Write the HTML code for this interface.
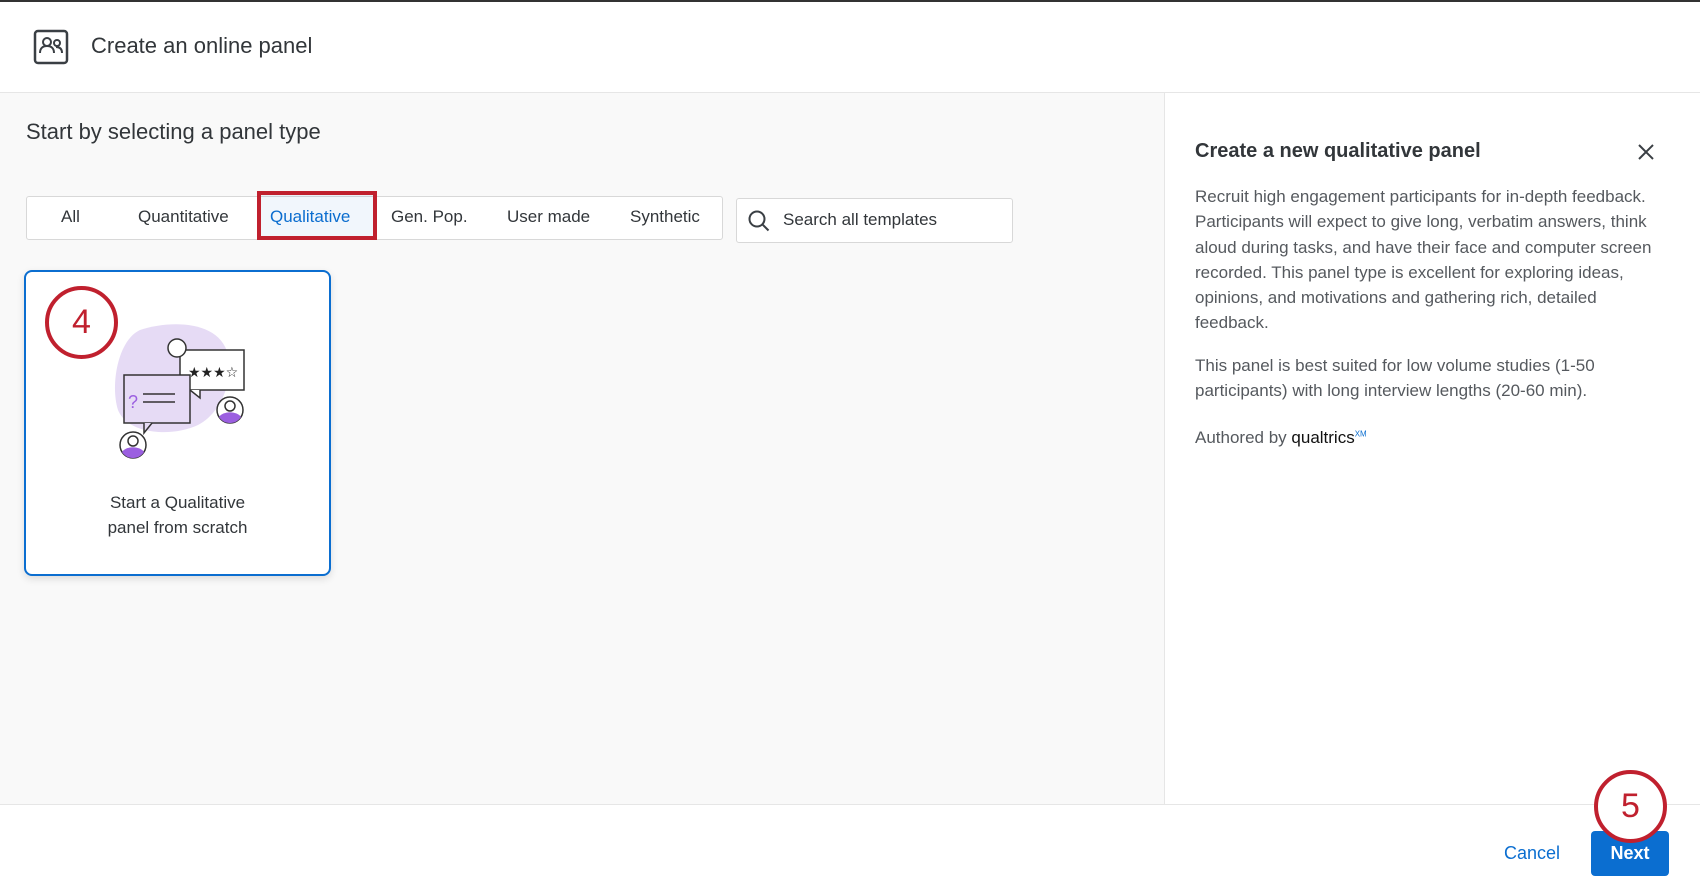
<!DOCTYPE html>
<html><head><style>
*{box-sizing:border-box;margin:0;padding:0}
body{width:1700px;height:886px;overflow:hidden;background:#fff;font-family:"Liberation Sans",sans-serif;color:#32363a;position:relative}
.abs{position:absolute}
</style></head><body>
<div class="abs" style="left:0;top:0;width:1700px;height:2px;background:#333"></div>
<div class="abs" style="left:0;top:92px;width:1164px;height:712px;background:#f9f9f9"></div>
<div class="abs" style="left:0;top:92px;width:1700px;height:1px;background:#e6e6e6"></div>
<div class="abs" style="left:1164px;top:92px;width:1px;height:712px;background:#e6e6e6"></div>
<div class="abs" style="left:0;top:804px;width:1700px;height:1px;background:#e6e6e6"></div>

<svg class="abs" style="left:33px;top:29px" width="36" height="36" viewBox="0 0 36 36"><rect x="2" y="2" width="32" height="32" rx="3" fill="none" stroke="#3a3f44" stroke-width="2.5"/><circle cx="14" cy="13" r="4" fill="none" stroke="#3a3f44" stroke-width="2"/><path d="M7 24c0-5 3-7 7-7s7 2 7 7" fill="none" stroke="#3a3f44" stroke-width="2"/><circle cx="24" cy="14" r="3" fill="none" stroke="#3a3f44" stroke-width="2"/><path d="M23 18c4 0 6 2 6 6" fill="none" stroke="#3a3f44" stroke-width="2"/></svg>
<div class="abs" style="left:91px;top:33px;font-size:22px">Create an online panel</div>
<div class="abs" style="left:26px;top:119px;font-size:22px">Start by selecting a panel type</div>

<div class="abs" style="left:26px;top:196px;width:697px;height:44px;background:#fff;border:1px solid #d8d8d8;border-radius:3px"></div>
<div class="abs" style="left:26px;top:207px;font-size:17px;width:697px;height:22px">
<span class="abs" style="left:35px">All</span>
<span class="abs" style="left:112px">Quantitative</span>
<span class="abs" style="left:244px;color:#0b6ed0">Qualitative</span>
<span class="abs" style="left:365px">Gen. Pop.</span>
<span class="abs" style="left:481px">User made</span>
<span class="abs" style="left:604px">Synthetic</span>
</div>
<div class="abs" style="left:257px;top:191px;width:120px;height:49px;border:4px solid #c0202e;background:rgba(11,110,208,0.06)"></div>
<div class="abs" style="left:736px;top:198px;width:277px;height:45px;background:#fff;border:1px solid #d8d8d8;border-radius:3px"></div>
<svg class="abs" style="left:747px;top:209px" width="24" height="24" viewBox="0 0 24 24"><circle cx="10" cy="10" r="7.5" fill="none" stroke="#3a3f44" stroke-width="2"/><path d="M15.5 15.5l6 6" stroke="#3a3f44" stroke-width="2"/></svg>
<div class="abs" style="left:783px;top:210px;font-size:17px">Search all templates</div>

<div class="abs" style="left:24px;top:270px;width:307px;height:306px;background:#fff;border:2px solid #0b6ed0;border-radius:8px;box-shadow:0 3px 8px rgba(0,0,0,0.12)"></div>
<svg class="abs" style="left:100px;top:310px" width="160" height="160" viewBox="0 0 160 160">
<path d="M40 20c30-10 80-10 88 25 6 30-10 60-30 70-25 12-70 10-80-15-8-25 0-70 22-80z" fill="#e6dbf5"/>
<rect x="80" y="40" width="64" height="40" fill="#fff" stroke="#333" stroke-width="1.5"/>
<text x="88" y="67" font-size="14" fill="#222" font-family="DejaVu Sans">★★★☆</text>
<path d="M90 80l10 8v-8" fill="#fff" stroke="#333" stroke-width="1.5"/>
<circle cx="77" cy="38" r="9" fill="#fff" stroke="#333" stroke-width="1.5"/>
<rect x="24" y="65" width="66" height="48" fill="#e6dbf5" stroke="#333" stroke-width="1.5"/>
<path d="M52 113l-8 10v-10" fill="#e6dbf5" stroke="#333" stroke-width="1.5"/>
<text x="28" y="98" font-size="18" fill="#9b5fe0">?</text>
<path d="M43 84h32M43 92h32" stroke="#333" stroke-width="1.5"/>
<circle cx="130" cy="100" r="13" fill="#fff" stroke="#333" stroke-width="1.5"/>
<path d="M119 107a12 8 0 0 1 22 0a13 13 0 0 1-22 0z" fill="#9b5fe0"/>
<circle cx="130" cy="96" r="5" fill="none" stroke="#333" stroke-width="1.5"/>
<circle cx="33" cy="135" r="13" fill="#fff" stroke="#333" stroke-width="1.5"/>
<path d="M22 142a12 8 0 0 1 22 0a13 13 0 0 1-22 0z" fill="#9b5fe0"/>
<circle cx="33" cy="131" r="5" fill="none" stroke="#333" stroke-width="1.5"/>
</svg>
<div class="abs" style="left:45px;top:286px;width:73px;height:73px;border:4px solid #c0202e;border-radius:50%;background:#fff;font-size:34px;color:#c0202e;text-align:center;line-height:65px">4</div>
<div class="abs" style="left:24px;top:490px;width:307px;text-align:center;font-size:17px;line-height:25px">Start a Qualitative<br>panel from scratch</div>

<div class="abs" style="left:1195px;top:140px;font-size:20px;font-weight:bold">Create a new qualitative panel</div>
<svg class="abs" style="left:1637px;top:143px" width="18" height="18" viewBox="0 0 18 18"><path d="M2 2l14 14M16 2L2 16" stroke="#3a3f44" stroke-width="2"/></svg>
<div class="abs" style="left:1195px;top:184px;width:480px;font-size:17px;line-height:25.3px;color:#55595e">Recruit high engagement participants for in-depth feedback. Participants will expect to give long, verbatim answers, think aloud during tasks, and have their face and computer screen recorded. This panel type is excellent for exploring ideas, opinions, and motivations and gathering rich, detailed feedback.</div>
<div class="abs" style="left:1195px;top:353px;width:480px;font-size:17px;line-height:25.3px;color:#55595e">This panel is best suited for low volume studies (1-50 participants) with long interview lengths (20-60 min).</div>
<div class="abs" style="left:1195px;top:428px;font-size:17px;color:#55595e">Authored by <span style="color:#111;font-family:'Liberation Sans Narrow','Liberation Sans',sans-serif">qualtrics</span><sup style="font-size:8px;color:#0b6ed0">XM</sup></div>

<div class="abs" style="left:1504px;top:843px;font-size:18px;color:#0b6ed0">Cancel</div>
<div class="abs" style="left:1591px;top:831px;width:78px;height:45px;background:#0b6ed0;border-radius:4px;color:#fff;font-size:18px;text-align:center;line-height:45px;font-weight:bold">Next</div>
<div class="abs" style="left:1594px;top:770px;width:73px;height:73px;border:4px solid #c0202e;border-radius:50%;background:#fff;font-size:34px;color:#c0202e;text-align:center;line-height:65px">5</div>
</body></html>
